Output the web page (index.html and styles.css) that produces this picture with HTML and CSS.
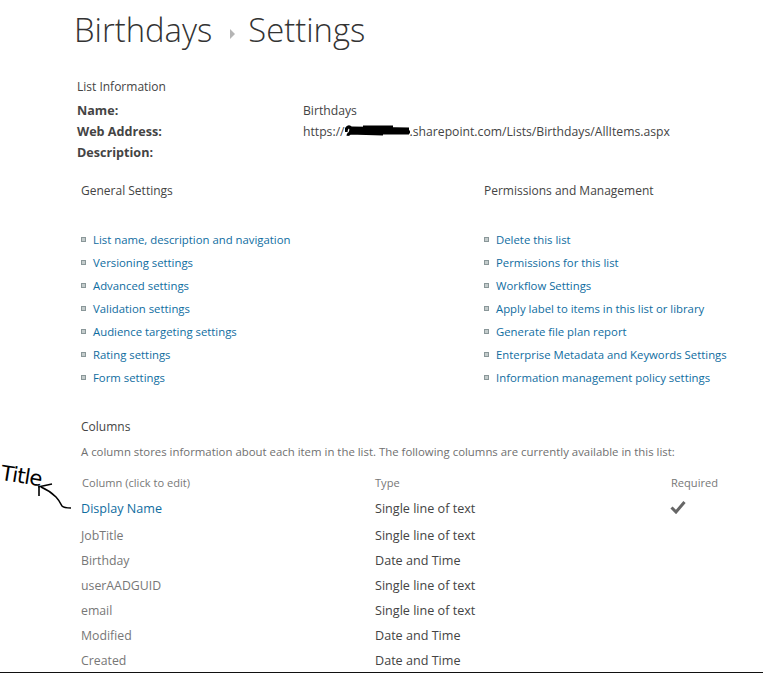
FILE: index.html
```html
<!DOCTYPE html>
<html lang="en">
<head>
  <meta charset="UTF-8" />
  <title>Birthdays - Settings</title>
  <link rel="stylesheet" href="styles.css">
</head>
<body>
  <h1 class="page-title">Birthdays <span class="crumb-arrow"></span> Settings</h1>

  <section class="list-info">
    <h2 class="section-title">List Information</h2>
    <dl class="info-grid">
      <dt>Name:</dt>
      <dd>Birthdays</dd>
      <dt>Web Address:</dt>
      <dd>https://<span class="redacted"><svg width="68" height="14" viewBox="0 0 68 14"><path class="redact-mark" d="M3 9C3 4 6 3 8 5C8 10 6 12 4 11M9 5L66 6M9 8L67 9M6 10L40 11M20 4L50 4M36 10L66 10" /></svg></span>.sharepoint.com/Lists/Birthdays/AllItems.aspx</dd>
      <dt>Description:</dt>
      <dd></dd>
    </dl>
  </section>

  <section class="settings">
    <div class="settings-col">
      <h2 class="section-title">General Settings</h2>
      <ul class="link-list">
        <li><a href="#">List name, description and navigation</a></li>
        <li><a href="#">Versioning settings</a></li>
        <li><a href="#">Advanced settings</a></li>
        <li><a href="#">Validation settings</a></li>
        <li><a href="#">Audience targeting settings</a></li>
        <li><a href="#">Rating settings</a></li>
        <li><a href="#">Form settings</a></li>
      </ul>
    </div>
    <div class="settings-col">
      <h2 class="section-title">Permissions and Management</h2>
      <ul class="link-list">
        <li><a href="#">Delete this list</a></li>
        <li><a href="#">Permissions for this list</a></li>
        <li><a href="#">Workflow Settings</a></li>
        <li><a href="#">Apply label to items in this list or library</a></li>
        <li><a href="#">Generate file plan report</a></li>
        <li><a href="#">Enterprise Metadata and Keywords Settings</a></li>
        <li><a href="#">Information management policy settings</a></li>
      </ul>
    </div>
  </section>

  <section class="columns">
    <h2 class="section-title">Columns</h2>
    <p class="columns-desc">A column stores information about each item in the list. The following columns are currently available in this list:</p>
    <div class="col-table">
      <div class="col-row col-head"><span>Column (click to edit)</span><span>Type</span><span>Required</span></div>
      <div class="col-row col-first"><a href="#">Display Name</a><span class="col-type">Single line of text</span><svg class="check" width="16" height="14" viewBox="0 0 16 14"><path d="M1.5 7.5L6 12L14.5 2" /></svg></div>
      <div class="col-row"><span>JobTitle</span><span class="col-type">Single line of text</span></div>
      <div class="col-row"><span>Birthday</span><span class="col-type">Date and Time</span></div>
      <div class="col-row"><span>userAADGUID</span><span class="col-type">Single line of text</span></div>
      <div class="col-row"><span>email</span><span class="col-type">Single line of text</span></div>
      <div class="col-row"><span>Modified</span><span class="col-type">Date and Time</span></div>
      <div class="col-row"><span>Created</span><span class="col-type">Date and Time</span></div>
    </div>
  </section>

  <!-- hand drawn note on top of the screenshot -->
  <span class="note-text">Title</span>
  <svg class="note-arrow" width="50" height="36" viewBox="0 0 50 36"><path d="M46 34C42 34 39 34 37 32C35 28 33 25 31 23C27 19 23 16 16 13M13 13L27 10M14 13L14 22" /></svg>
</body>
</html>
```

FILE: styles.css
```css
/* === Global Styles === */
html {
  height: 673px;
  overflow: hidden;
}

body {
  font-family: "Open Sans", sans-serif;
  font-size: 12px;
  color: #444;
  margin: 0;
  height: 672px;
  padding-left: 68px;
  border-bottom: 1px solid #111;
  background-color: #fff;
  position: relative;
  overflow: hidden;
  box-sizing: content-box;
}

a {
  color: #0f6d9f;
  text-decoration: none;
}

/* === Title === */
.page-title {
  font-size: 32.8px;
  font-weight: 300;
  line-height: 44px;
  color: #333;
  margin: 8px 0 0 6px;
  white-space: nowrap;
  word-spacing: 4px;
}

.crumb-arrow {
  display: inline-block;
  width: 0;
  height: 0;
  margin: 0 1px 3px 5px;
  border-left: 5px solid #b5b5b5;
  border-top: 5px solid transparent;
  border-bottom: 5px solid transparent;
}

.section-title {
  font-size: 12px;
  font-weight: 400;
  line-height: 18px;
  color: #444;
  margin: 0;
}

/* === List Information === */
.list-info {
  margin: 26px 0 0 9px;
}

.info-grid {
  display: grid;
  grid-template-columns: 226px 1fr;
  grid-auto-rows: 21px;
  align-items: center;
  margin: 4px 0 0;
}

.info-grid dt {
  font-size: 12.6px;
  font-weight: 700;
}

.info-grid dd {
  margin: 0;
  font-size: 12.2px;
  white-space: nowrap;
}

.redacted {
  display: inline-block;
  width: 65px;
  height: 12px;
  vertical-align: -1px;
}

.redact-mark {
  fill: none;
  stroke: #000;
  stroke-width: 3.2;
  transform: translate(-2px, 0);
}

/* === Settings links === */
.settings {
  display: grid;
  grid-template-columns: 403px 1fr;
  margin: 19px 0 0 13px;
}

.link-list {
  list-style: none;
  margin: 28px 0 0;
  padding: 0;
}

.link-list li {
  display: flex;
  align-items: center;
  gap: 7px;
  height: 23px;
  font-size: 11.35px;
  white-space: nowrap;
}

.link-list li::before {
  content: "";
  width: 3px;
  height: 3px;
  background-color: #c4cccc;
  border: 1px solid #8a9799;
}

/* === Columns === */
.columns {
  margin: 29px 0 0 13px;
}

.columns-desc {
  margin: 7px 0 0;
  font-size: 11.4px;
  line-height: 18px;
  color: #707070;
  white-space: nowrap;
}

.col-table {
  margin-top: 11px;
}

.col-row {
  display: grid;
  grid-template-columns: 294px 296px 1fr;
  align-items: center;
  height: 25px;
  font-size: 12.3px;
  color: #777;
}

.col-head {
  font-size: 11.1px;
  height: 21px;
  padding-left: 1px;
  grid-template-columns: 293px 296px 1fr;
}

.col-first {
  height: 30px;
}

.col-first a {
  font-size: 12.6px;
}

.col-type {
  font-size: 12.6px;
  color: #444;
}

.check {
  margin-left: -1px;
  margin-top: -3px;
}

.check path {
  fill: none;
  stroke: #666;
  stroke-width: 3;
}

/* === Hand drawn note === */
.note-text {
  position: absolute;
  left: 3px;
  top: 461px;
  font-family: "DejaVu Sans", sans-serif;
  font-size: 21px;
  letter-spacing: -0.8px;
  color: #000;
  transform: rotate(9deg);
  transform-origin: left top;
}

.note-arrow {
  position: absolute;
  left: 25px;
  top: 474px;
}

.note-arrow path {
  fill: none;
  stroke: #000;
  stroke-width: 1.6;
}
```
